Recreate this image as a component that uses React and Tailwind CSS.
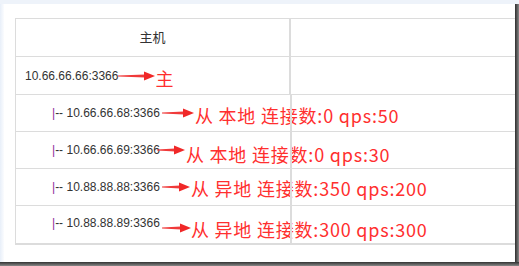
import React from 'react';

// little red annotation arrow, tapered shaft with a solid head
function Arrow({ w = 34 }) {
  return (
    <svg width={w} height="10" viewBox={`0 0 ${w} 10`} className="shrink-0">
      <polygon points={`0,4.6 ${w - 10},3.5 ${w - 10},6.5 0,5.4`} fill="#f03a3a" />
      <polygon points={`${w - 11},0.5 ${w},5 ${w - 11},9.5`} fill="#f02828" />
    </svg>
  );
}

function Note({ children, className = '' }) {
  return (
    <span
      className={`whitespace-pre text-[18px] leading-none tracking-[0.8px] text-[#ff2f2f] ${className}`}
      style={{ fontFamily: '"Noto Sans CJK SC", "Noto Sans", sans-serif' }}
    >
      {children}
    </span>
  );
}

function Slave({ ip, arrow, note, gap = 'ml-[2px]', shift = 'mt-[4px]' }) {
  return (
    <div className="flex h-[37px] items-center border-b border-[#dcdcdc] pl-[36px]">
      <span className="text-[12px] text-[#333]">
        <span className="text-[#8b2d9c]">|</span>-- {ip}
      </span>
      <span className={gap}>
        <Arrow w={arrow} />
      </span>
      <Note className={`ml-[1px] ${shift}`}>{note}</Note>
    </div>
  );
}

export default function App() {
  return (
    <div
      className="flex h-[266px] w-[519px] flex-col bg-[#eef3fa]"
      style={{ fontFamily: '"Liberation Sans", Arial, "Noto Sans CJK SC", sans-serif' }}
    >
      <div className="h-[4px]" />
      <div className="flex flex-1 min-h-0">
        <div className="w-[4px] bg-gradient-to-r from-[#e8eff9] to-[#fbfcfe]" />
        <div className="flex-1 overflow-hidden bg-white pl-[11px] pt-[14px]">
          <div className="w-[520px] border-l border-t border-b-2 border-[#dcdcdc]">
            {/* header */}
            <div className="flex h-[38px] border-b border-[#dcdcdc]">
              <div className="flex w-[275px] items-center justify-center border-r-2 border-[#dcdcdc] text-[13px] text-[#333]">
                主机
              </div>
              <div className="flex-1" />
            </div>
            <div className="flex border-b border-[#dcdcdc]">
              <div className="flex h-[37px] w-[275px] items-center border-r-2 border-[#dcdcdc] pl-[9px]">
                <span className="text-[12px] text-[#333]">10.66.66.66:3366</span>
                <Arrow w={37} />
                <Note className="mt-[5px] text-[16px]">主</Note>
              </div>
              <div className="flex-1" />
            </div>
            <div className="relative">
              <div className="absolute left-[274px] top-0 bottom-0 w-[2px] bg-[#dcdcdc]" />
              <Slave ip="10.66.66.68:3366" arrow={32} note="从 本地 连接数:0 qps:50" />
              <Slave ip="10.66.66.69:3366" arrow={28} gap="-ml-[3px]" note="从 本地 连接数:0 qps:30" shift="mt-[7px]" />
              <Slave ip="10.88.88.88:3366" arrow={28} note="从 异地 连接数:350 qps:200" shift="mt-[2px]" />
              <div className="flex h-[37px] items-center pl-[36px]">
                <span className="-mt-[3px] text-[12px] text-[#333]">
                  <span className="text-[#8b2d9c]">|</span>-- 10.88.88.89:3366
                </span>
                <span className="ml-[2px] mt-[6px]">
                  <Arrow w={29} />
                </span>
                <Note className="mt-[8px]">从 异地 连接数:300 qps:300</Note>
              </div>
            </div>
          </div>
        </div>
        <div className="w-[4px] bg-gradient-to-r from-[#2e2e2e] to-[#8a8a8a]" />
      </div>
      <div className="h-[4px] bg-gradient-to-b from-[#333] to-[#8a8a8a]" />
    </div>
  );
}
